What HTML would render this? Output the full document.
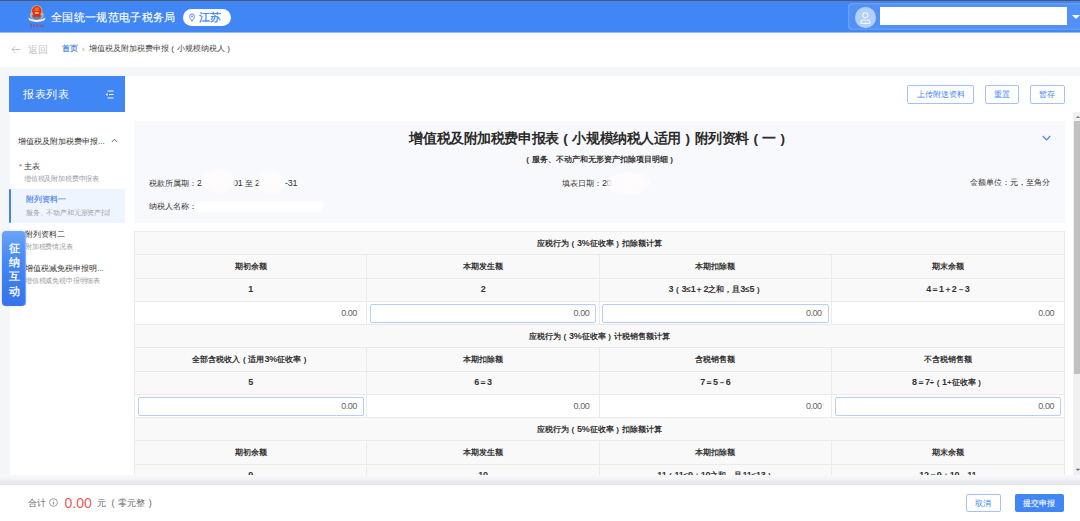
<!DOCTYPE html>
<html><head><meta charset="utf-8">
<style>
*{margin:0;padding:0;box-sizing:border-box}
html,body{width:1080px;height:521px;overflow:hidden}
body{position:relative;background:#f5f6f8;font-family:"Liberation Sans",sans-serif;color:#333}
.abs{position:absolute}
.nw{white-space:nowrap}
.p{display:inline-block;width:1em;text-align:center}
.topline{left:0;top:0;width:1080px;height:1px;background:#4a5873}
.hdr{left:0;top:1px;width:1080px;height:31px;background:#4086f4;box-shadow:0 1px 0 rgba(64,130,240,.55)}
.htitle{left:51px;top:10.7px;font-size:11px;line-height:13px;letter-spacing:0.35px;-webkit-text-stroke:0.15px #fff;color:#fff;white-space:nowrap}
.pill{left:183px;top:9px;width:48px;height:17px;border-radius:9px;background:#fff}
.pill span{position:absolute;left:16px;top:2.4px;color:#4086f4;font-size:11px;line-height:13px;-webkit-text-stroke:0.3px #4086f4;white-space:nowrap}
.user{left:848px;top:3px;width:240px;height:27px;border-radius:4px;background:#5190f5;box-shadow:inset 0 0 3px rgba(255,255,255,.35)}
.avatar{left:855px;top:7px;width:20.5px;height:20.5px;border-radius:50%;background:#b3d0fb}
.ubox{left:880px;top:7px;width:187px;height:18px;background:#fff}
.bread{left:0;top:32px;width:1080px;height:35px;background:#fff}
.back{left:28px;top:43px;font-size:10px;line-height:13px;color:#c4c4c4;white-space:nowrap}
.crumb{left:62px;top:44px;font-size:8px;line-height:10px;color:#444;white-space:nowrap}
.side{left:10px;top:76px;width:115px;height:399px;background:#fff}
.sidehd{left:9px;top:76px;width:116px;height:36px;background:#4086f4}
.sidehd span{position:absolute;left:14px;top:12px;font-size:11px;line-height:13px;letter-spacing:0.6px;color:#fff;white-space:nowrap}
.main{left:125px;top:76px;width:955px;height:399px;background:#fff}
.si{font-size:8px;line-height:10px;color:#333;white-space:nowrap}
.ss{font-size:7px;line-height:9px;letter-spacing:-0.18px;color:#a0a0a0;white-space:nowrap;overflow:hidden}
.btn{height:18.5px;border:1px solid #a3c3f8;border-radius:2px;background:#fff;color:#4086f4;font-size:8px;line-height:17.5px;text-align:center;white-space:nowrap}
.dochd{left:134px;top:121px;width:931px;height:102px;background:#f8f9fc}
.title{left:134px;top:130px;width:931px;text-align:center;font-size:14px;line-height:16px;font-weight:bold;color:#2a2a2a;white-space:nowrap;transform:scale(0.97)}
.subtitle{left:134px;top:155px;width:931px;text-align:center;font-size:8px;line-height:10px;font-weight:bold;color:#333;white-space:nowrap}
.info{font-size:8px;line-height:10px;color:#333;white-space:nowrap}
.n{font-size:9px;letter-spacing:-0.3px}
td .n{font-size:9px;letter-spacing:-0.2px}
td.v .n,td.in .n{letter-spacing:-0.45px}
.blur{border-radius:50%;background:radial-gradient(ellipse at center,rgba(254,252,253,.97) 0%,rgba(254,252,253,.95) 50%,rgba(254,252,253,.6) 75%,rgba(254,252,253,0) 100%)}
table{position:absolute;left:134px;top:231.1px;width:930.5px;border-collapse:collapse;table-layout:fixed}
td{border:1px solid #ebebeb;height:23.28px;font-size:8px;line-height:9px;font-weight:bold;color:#333;text-align:center;background:#f9f9f9;white-space:nowrap;padding:0;overflow:hidden}
td.v{background:#fff;font-weight:normal;color:#666;text-align:right;padding-right:9.5px;font-size:8px}
td.in{background:#fff;padding:1.8px 2.5px 1.4px}
td.in div{height:18.8px;border:1px solid #b5cff6;border-radius:2px;text-align:right;padding-right:6px;font-weight:normal;color:#666;font-size:8px;line-height:17px}
.scrolltr{left:1073px;top:112px;width:7px;height:363px;background:#f1f1f1}
.thumb{left:1074px;top:121px;width:6px;height:253px;background:#c1c1c1}
.footer{left:0;top:485px;width:1080px;height:36px;background:#fff}
.fshadow{left:0;top:475px;width:1080px;height:10px;background:linear-gradient(#f8f9fa 0%,#f3f4f7 40%,#e9eaee 75%,#e4e5ea 100%)}
.tab{left:1.5px;top:230.5px;width:24.5px;height:75.5px;border-radius:4px;background:linear-gradient(180deg,#6aa4fa 0%,#4a8bf5 35%,#3b7cf0 70%,#3673ea 100%);box-shadow:inset -1px 0 1px rgba(255,255,255,.35),0 0 2px rgba(60,120,240,.4)}
.tab span{position:absolute;left:6px;top:10.5px;width:13px;font-size:11px;line-height:14.2px;-webkit-text-stroke:0.35px #fff;color:#fff;text-align:center}
</style></head><body>
<div class="abs bread"></div>
<div class="abs topline"></div>
<div class="abs hdr"></div>
<svg class="abs" style="left:0;top:0" width="60" height="32" viewBox="0 0 60 32">
  <ellipse cx="36.8" cy="15" rx="7" ry="5.3" fill="#aeb5bf"/>
  <ellipse cx="36.8" cy="16" rx="4.9" ry="3.8" fill="#6f7d92"/>
  <circle cx="36.8" cy="10.8" r="5.6" fill="#f0b52c"/>
  <circle cx="36.8" cy="10.8" r="4.8" fill="#e52f27"/>
  <rect x="33.3" y="14.2" width="7" height="2.6" fill="#d8282a"/>
  <ellipse cx="36.8" cy="12.9" rx="2.2" ry="1" fill="#f7c948"/>
  <path d="M35 8.2h3.6M34.4 10h4.8" stroke="#f5b93c" stroke-width="0.8"/>
  <path d="M28.3 17.4 L31 19.1 Q36.8 21 42.6 19.1 L45.5 17.4 L44.6 20.2 Q36.8 23.8 29.2 20.2 Z" fill="#f3f3f3"/>
  <path d="M30 24.6 q1-0.6 1.8 0 M30.9 24.8 v3.4 M33.2 25 q1-0.5 1.6 0.3 q-0.4 1.3-1.5 1.7 M36.3 24.9 q1.1-0.4 1.5 0.7 q-0.4 1.2-1.5 1.4 M39.4 25 q1.1-0.5 1.7 0.5 q-0.5 1.2-1.7 1.3 M42.2 24.8 q1.2 0.4 1 1.6 q-0.6 0.8-1.4 0.6" fill="none" stroke="#d02c2c" stroke-width="0.7"/>
</svg>
<div class="abs htitle">全国统一规范电子税务局</div>
<div class="abs pill"><svg style="position:absolute;left:6px;top:4.2px" width="6" height="9" viewBox="0 0 6 9"><path d="M3 8.3 C1.3 6 0.6 4.6 0.6 3.3 A2.4 2.4 0 0 1 5.4 3.3 C5.4 4.6 4.7 6 3 8.3Z" fill="none" stroke="#4086f4" stroke-width="0.9"/><circle cx="3" cy="3.3" r="0.9" fill="#4086f4"/></svg><span>江苏</span></div>
<div class="abs user"></div>
<div class="abs avatar"></div>
<svg class="abs" style="left:859px;top:11px" width="13" height="13" viewBox="0 0 13 13"><circle cx="6.3" cy="4.3" r="2.5" fill="none" stroke="#eef5ff" stroke-width="1.1"/><path d="M1.8 12.4 v-1.4 q0-2 2-2 h5 q2 0 2 2 v1.4z" fill="none" stroke="#eef5ff" stroke-width="1.1"/></svg>
<div class="abs ubox"></div>
<svg class="abs" style="left:1072px;top:15px" width="8" height="5" viewBox="0 0 8 5"><path d="M0 0 L8 0 L4 4z" fill="#fff"/></svg>

<svg class="abs" style="left:11px;top:45px" width="10" height="9" viewBox="0 0 10 9"><path d="M9.5 4.5 H1 M4.5 1 L1 4.5 L4.5 8" fill="none" stroke="#c4c4c4" stroke-width="1"/></svg>
<div class="abs back">返回</div>
<div class="abs crumb"><span style="color:#3f7fe6;-webkit-text-stroke:0.2px #3f7fe6">首页</span><span style="color:#999;margin:0 4px 0 4px;position:relative;top:0.5px">›</span>增值税及附加税费申报<span class="p">(</span>小规模纳税人<span class="p">)</span></div>

<div class="abs side"></div>
<div class="abs main"></div>
<div class="abs sidehd"><span>报表列表</span>
<svg style="position:absolute;left:96px;top:14px" width="9" height="9" viewBox="0 0 9 9"><path d="M2.5 1h6 M4 4.5h4.5 M2.5 8h6" stroke="#fff" stroke-width="1.1"/><path d="M0.5 4.5 L2.5 3 V6z" fill="#fff"/></svg>
</div>

<div class="abs si" style="left:18px;top:136.5px">增值税及附加税费申报...</div>
<svg class="abs" style="left:111px;top:137.5px" width="7" height="5" viewBox="0 0 7 5"><path d="M0.8 4 L3.5 1.2 L6.2 4" fill="none" stroke="#555" stroke-width="0.9"/></svg>
<div class="abs" style="left:19px;top:161.5px;font-size:8px;color:#f04848;line-height:10px">*</div>
<div class="abs si" style="left:24px;top:161.5px">主表</div>
<div class="abs ss" style="left:24px;top:173.5px">增值税及附加税费申报表</div>
<div class="abs" style="left:10px;top:189.2px;width:115px;height:33.8px;background:#eff5fe"></div><div class="abs" style="left:9.2px;top:189.2px;width:2px;height:33.8px;border-radius:1px;background:#3f82f2"></div>
<div class="abs si" style="left:26px;top:195px;color:#4a82ec;-webkit-text-stroke:0.15px #4a82ec">附列资料一</div>
<div class="abs ss" style="left:26px;top:208px;width:84px">服务、不动产和无形资产扣除项目明细</div>
<div class="abs si" style="left:25px;top:229.5px">附列资料二</div>
<div class="abs ss" style="left:25px;top:241.5px">附加税费情况表</div>
<div class="abs si" style="left:25px;top:264px">增值税减免税申报明...</div>
<div class="abs ss" style="left:25px;top:275.5px">增值税减免税申报明细表</div>

<div class="abs btn" style="left:907px;top:85px;width:67px">上传附送资料</div>
<div class="abs btn" style="left:984.5px;top:85px;width:34.5px">重置</div>
<div class="abs btn" style="left:1030px;top:85px;width:34.5px">暂存</div>

<div class="abs dochd"></div>
<div class="abs title">增值税及附加税费申报表<span class="p">(</span>小规模纳税人适用<span class="p">)</span>附列资料<span class="p">(</span>一<span class="p">)</span></div>
<svg class="abs" style="left:1042px;top:135px" width="9" height="6" viewBox="0 0 9 6"><path d="M0.8 1 L4.5 4.8 L8.2 1" fill="none" stroke="#4a86e8" stroke-width="1.2"/></svg>
<div class="abs subtitle"><span class="p">(</span>服务、不动产和无形资产扣除项目明细<span class="p">)</span></div>
<div class="abs info" style="left:149px;top:177.5px">税款所属期：<span class="n">2</span></div>
<div class="abs info" style="left:233px;top:177.5px"><span class="n">01</span> 至 <span class="n">2</span></div>
<div class="abs info" style="left:285px;top:177.5px"><span class="n">-31</span></div>
<div class="abs blur" style="left:201px;top:170px;width:35px;height:23px"></div>
<div class="abs blur" style="left:257.5px;top:171px;width:27px;height:23px"></div>
<div class="abs info" style="left:562px;top:177.5px">填表日期：<span class="n">20</span></div>
<div class="abs blur" style="left:607px;top:172px;width:43px;height:23px"></div>
<div class="abs info" style="left:970px;top:178px">金额单位：元，至角分</div>
<div class="abs info" style="left:149px;top:201.5px">纳税人名称：</div>
<div class="abs" style="left:195px;top:201px;width:128px;height:11px;background:#fff"></div>

<table>
<tr><td colspan="4">应税行为<span class="p">(</span><span class="n">3%</span>征收率<span class="p">)</span>扣除额计算</td></tr>
<tr><td>期初余额</td><td>本期发生额</td><td>本期扣除额</td><td>期末余额</td></tr>
<tr><td><span class="n">1</span></td><td><span class="n">2</span></td><td><span class="n">3</span><span class="p">(</span><span class="n">3</span>≤<span class="n">1</span>＋<span class="n">2</span>之和，且<span class="n">3</span>≤<span class="n">5</span><span class="p">)</span></td><td><span class="n">4</span>＝<span class="n">1</span>＋<span class="n">2</span>－<span class="n">3</span></td></tr>
<tr><td class="v"><span class="n">0.00</span></td><td class="in"><div><span class="n">0.00</span></div></td><td class="in"><div><span class="n">0.00</span></div></td><td class="v"><span class="n">0.00</span></td></tr>
<tr><td colspan="4">应税行为<span class="p">(</span><span class="n">3%</span>征收率<span class="p">)</span>计税销售额计算</td></tr>
<tr><td>全部含税收入<span class="p">(</span>适用<span class="n">3%</span>征收率<span class="p">)</span></td><td>本期扣除额</td><td>含税销售额</td><td>不含税销售额</td></tr>
<tr><td><span class="n">5</span></td><td><span class="n">6</span>＝<span class="n">3</span></td><td><span class="n">7</span>＝<span class="n">5</span>－<span class="n">6</span></td><td><span class="n">8</span>＝<span class="n">7</span>÷<span class="p">(</span><span class="n">1</span>+征收率<span class="p">)</span></td></tr>
<tr><td class="in"><div><span class="n">0.00</span></div></td><td class="v"><span class="n">0.00</span></td><td class="v"><span class="n">0.00</span></td><td class="in"><div><span class="n">0.00</span></div></td></tr>
<tr><td colspan="4">应税行为<span class="p">(</span><span class="n">5%</span>征收率<span class="p">)</span>扣除额计算</td></tr>
<tr><td>期初余额</td><td>本期发生额</td><td>本期扣除额</td><td>期末余额</td></tr>
<tr><td><span class="n">9</span></td><td><span class="n">10</span></td><td><span class="n">11</span><span class="p">(</span><span class="n">11</span>≤<span class="n">9</span>＋<span class="n">10</span>之和，且<span class="n">11</span>≤<span class="n">13</span><span class="p">)</span></td><td><span class="n">12</span>＝<span class="n">9</span>＋<span class="n">10</span>－<span class="n">11</span></td></tr>
</table>
<div class="abs scrolltr"></div>
<div class="abs thumb"></div>
<svg class="abs" style="left:1075px;top:114.5px" width="5" height="4" viewBox="0 0 5 4"><path d="M0.8 3 L3 0.8 L5.2 3z" fill="#8a8a8a"/></svg>
<svg class="abs" style="left:1075px;top:468px" width="5" height="4" viewBox="0 0 5 4"><path d="M0.8 0.8 L3 3 L5.2 0.8z" fill="#666"/></svg>

<div class="abs tab"><span>征纳互动</span></div>

<div class="abs footer"></div>
<div class="abs fshadow"></div>
<div class="abs nw" style="left:28px;top:498px;font-size:9px;line-height:11px;color:#666">合计</div>
<svg class="abs" style="left:48.5px;top:498px" width="9" height="9" viewBox="0 0 9 9"><circle cx="4.5" cy="4.5" r="3.9" fill="none" stroke="#888" stroke-width="0.8"/><path d="M4.5 2.5v0.8M4.5 4v2.6" stroke="#888" stroke-width="0.9"/></svg>
<div class="abs nw" style="left:64.5px;top:495px;font-size:14px;line-height:16px;color:#f05a5a">0.00</div>
<div class="abs nw" style="left:96.5px;top:498px;font-size:9px;line-height:11px;color:#666">元<span class="p" style="margin-left:2px;width:1.2em">(</span>零元整<span class="p" style="width:1.1em">)</span></div>
<div class="abs btn" style="left:966px;top:493.5px;width:34.5px;height:18.5px;line-height:18px">取消</div>
<div class="abs" style="left:1014.5px;top:493.5px;width:49.5px;height:18.5px;border-radius:2px;background:#4086f4;color:#fff;font-size:8px;line-height:20px;text-align:center;white-space:nowrap;-webkit-text-stroke:0.1px #fff">提交申报</div>
</body></html>
